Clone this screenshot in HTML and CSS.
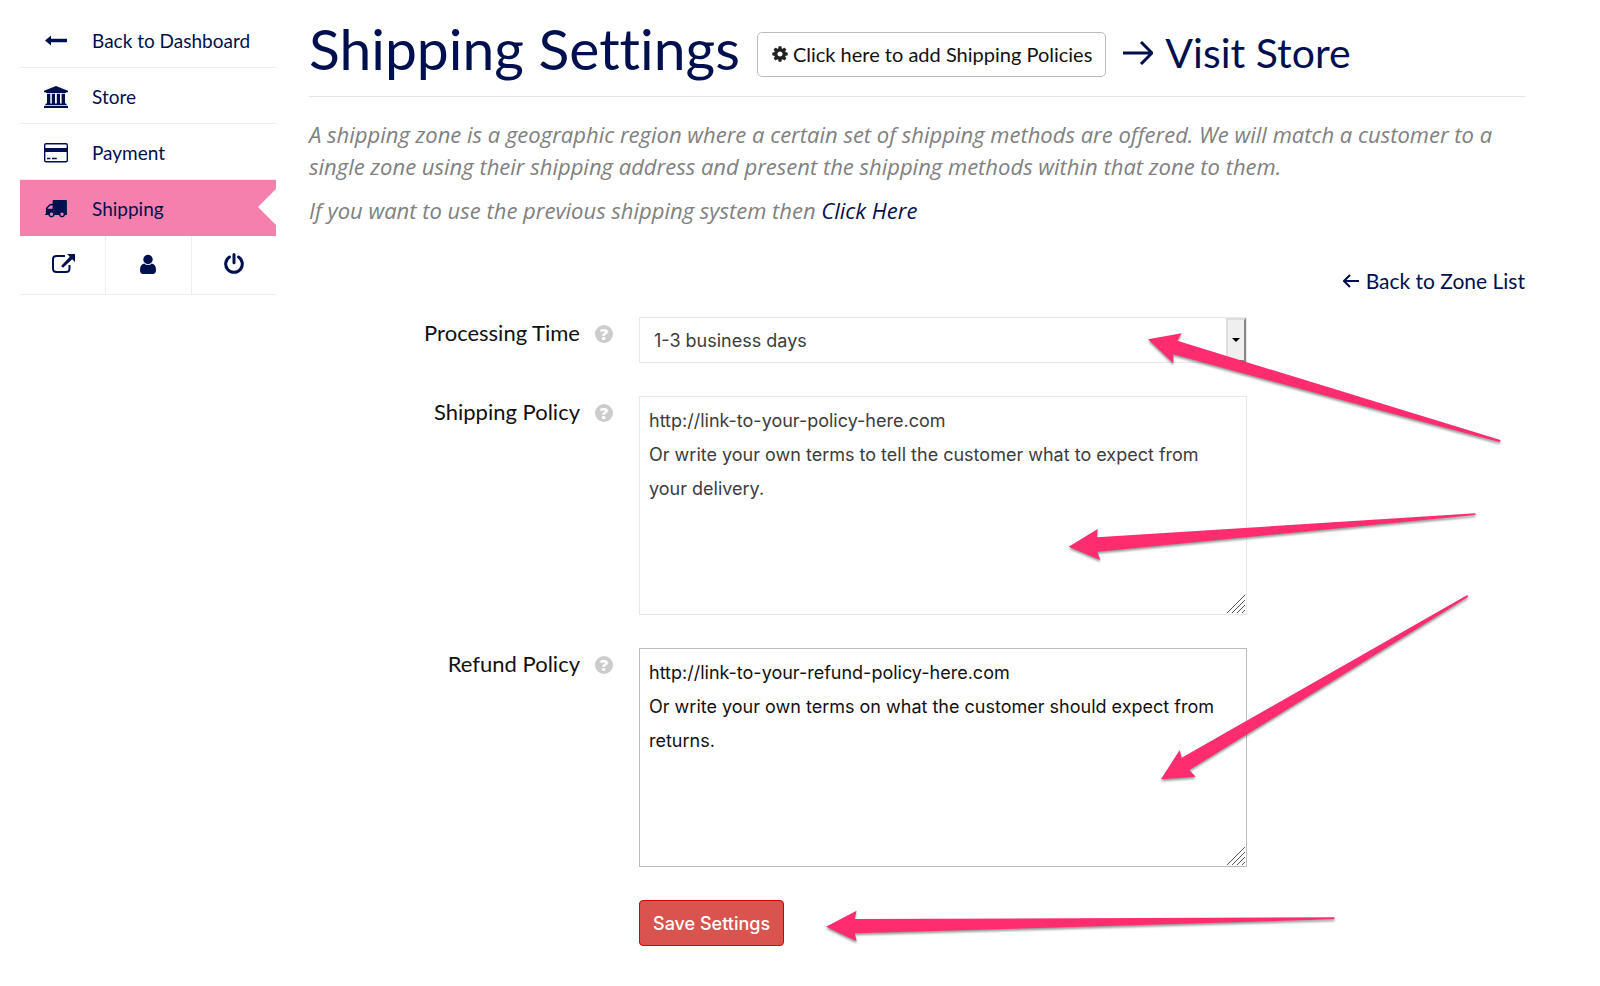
FILE: index.html
```html
<!DOCTYPE html>
<html lang="en">
<head>
<meta charset="utf-8">
<title>Shipping Settings</title>
<link rel="stylesheet" href="styles.css">
</head>
<body>
<div class="layout">
  <nav class="sidebar">
    <a class="nav-item" href="#"><svg class="nav-icon" viewBox="0 0 24 24"><path d="M1 11.500l6-5v3.300h16v3.400H7v3.300z"/></svg>Back to Dashboard</a>
    <a class="nav-item" href="#"><svg class="nav-icon" viewBox="0 0 24 24"><path d="M12 1l12 4.800v1.400h-1.600q0 .8-.8.8H2.400q-.8 0-.8-.8H0V5.800zM3 8.800h3.300v9.600h1.500V8.800H11v9.600h1.800V8.800h3.200v9.600h1.600V8.800H21v9.600h.8q.8 0 .8.800v.8H1.400v-.8q0-.8.800-.8H3zM.8 20.800h22.400q.8 0 .8.800V23H0v-1.400q0-.8.8-.8z"/></svg>Store</a>
    <a class="nav-item" href="#"><svg class="nav-icon" viewBox="0 0 24 24"><path fill-rule="evenodd" d="M2 2h20q2 0 2 2v15.500q0 2-2 2H2q-2 0-2-2V4q0-2 2-2zm0 1.500q-.6 0-.6.600V7h21.200V4.100q0-.6-.6-.6zM1.400 11v8.300q0 .7.6.7h20q.6 0 .6-.7V11zM3 16.800h3.400v1.500H3zM8 16.800h4.800v1.500H8z"/></svg>Payment</a>
    <a class="nav-item active" href="#"><svg class="nav-icon" viewBox="0 0 24 24"><path fill-rule="evenodd" d="M9.500 3H22q.9 0 .9.900v13.300q0 .9-.9.900h-.9a3.200 3.200 0 0 1-6.200 0h-4.300a3.200 3.200 0 0 1-6.200 0H1.600q-.6 0-.6-.8.900-.6.900-1.100v-4.300q0-1 .6-1.600l2.900-2.900q.6-.6 1.500-.6H8.600V3.900q0-.9.900-.9zM3.700 11.700h4.900V8.400H6.800q-.3 0-.5.200L3.900 11q-.2.200-.2.400zM7.500 15.600a1.700 1.700 0 1 0 0 3.400 1.700 1.700 0 0 0 0-3.400zM18 15.600a1.700 1.700 0 1 0 0 3.400 1.700 1.700 0 0 0 0-3.400z"/></svg>Shipping</a>
    <div class="quick-links">
      <a class="quick-link" href="#" aria-label="Open store"><svg class="nav-icon" viewBox="0 0 24 24"><path class="line" d="M14 4H5.500Q2 4 2 7v9.500Q2 20 5.500 20H15q3.500 0 3.500-3.500V13"/><path d="M16 2h8v8l-2.800-2.800-9.200 8.600-1.900-1.900 8.700-9.100z"/></svg></a>
      <a class="quick-link" href="#" aria-label="Profile"><svg class="nav-icon" viewBox="0 0 24 24"><circle cx="12" cy="7.500" r="4.700"/><path d="M8.200 11.500a5.500 5.500 0 0 0 7.600 0q4.200.8 4.200 6.500 0 4-3.200 4H7.200Q4 22 4 18q0-5.700 4.200-6.500z"/></svg></a>
      <a class="quick-link" href="#" aria-label="Log out"><svg class="nav-icon" viewBox="0 0 24 24"><path class="thick" d="M7.500 5a8.300 8.300 0 1 0 9 0M12 2.400v8.400"/></svg></a>
    </div>
  </nav>
  <main class="content">
    <header class="page-header">
      <h1 class="page-title">Shipping Settings</h1>
      <a class="policy-button" href="#"><svg class="cog" viewBox="0 0 1792 1792"><path d="M1152 896q0-106-75-181t-181-75-181 75-75 181 75 181 181 75 181-75 75-181zm512-109v222q0 12-8 23t-20 13l-185 28q-19 54-39 91 35 50 107 138 10 12 10 25t-9 23q-27 37-99 108t-94 71q-12 0-26-9l-138-108q-44 23-91 38-16 136-29 186-7 28-36 28h-222q-14 0-24.500-8.500t-11.500-21.500l-28-184q-49-16-90-37l-141 107q-10 9-25 9-14 0-25-11-126-114-165-168-7-10-7-23 0-12 8-23 15-21 51-66.500t54-70.500q-27-50-41-99l-183-27q-13-2-21-12.500t-8-23.500v-222q0-12 8-23t19-13l186-28q14-46 39-92-40-57-107-138-10-12-10-24 0-10 9-23 26-36 98.500-107.500t94.500-71.500q13 0 26 10l138 107q44-23 91-38 16-136 29-186 7-28 36-28h222q14 0 24.500 8.500t11.500 21.500l28 184q49 16 90 37l142-107q9-9 24-9 13 0 25 10 129 119 165 170 7 8 7 22 0 12-8 23-15 21-51 66.500t-54 70.500q26 50 41 98l183 28q13 2 21 12.500t8 23.500z"/></svg>Click here to add Shipping Policies</a>
      <a class="visit-link" href="#"><svg class="arrow-right" viewBox="0 0 30 24"><path d="M0 12h28M18 1l11 11-11 11"/></svg>Visit Store</a>
    </header>
    <p class="intro">A shipping zone is a geographic region where a certain set of shipping methods are offered. We will match a customer to a single zone using their shipping address and present the shipping methods within that zone to them.</p>
    <p class="intro">If you want to use the previous shipping system then <a class="link" href="#">Click Here</a></p>
    <div class="back-row"><a class="back-link" href="#"><svg class="arrow-left" viewBox="0 0 16 14"><path d="M16 7H1M7 1L1 7l6 6"/></svg>Back to Zone List</a></div>
    <form class="settings">
      <div class="field">
        <div class="field-label"><label for="time">Processing Time</label><button class="help" type="button">?</button></div>
        <div class="control">
          <select class="select" id="time"><option>1-3 business days</option></select>
          <span class="select-arrow"></span>
        </div>
      </div>
      <div class="field">
        <div class="field-label"><label for="shipping">Shipping Policy</label><button class="help" type="button">?</button></div>
        <div class="control">
          <textarea class="textarea" id="shipping">http://link-to-your-policy-here.com
Or write your own terms to tell the customer what to expect from your delivery.</textarea>
          <svg class="grip" viewBox="0 0 18 18"><path d="M0 18L18 0M5 18L18 5M10 18l8-8M15 18l3-3"/></svg>
        </div>
      </div>
      <div class="field">
        <div class="field-label"><label for="refund">Refund Policy</label><button class="help" type="button">?</button></div>
        <div class="control">
          <textarea class="textarea focused" id="refund">http://link-to-your-refund-policy-here.com
Or write your own terms on what the customer should expect from returns.</textarea>
          <svg class="grip" viewBox="0 0 18 18"><path d="M0 18L18 0M5 18L18 5M10 18l8-8M15 18l3-3"/></svg>
        </div>
      </div>
      <div class="field">
        <button class="save" type="submit">Save Settings</button>
      </div>
    </form>
  </main>
</div>
<svg class="annotations" viewBox="0 0 1600 986">
  <path d="M1148 339.300L1181.700 333.300 1177.300 340.700Q1340 391 1500.500 440L1500 442.300Q1340 400 1173.300 354.300V363.300z"/>
  <path d="M1068.700 546.700L1097.700 529 1097 537.300 1475.500 513.300V515L1097.300 551.700 1100.300 560z"/>
  <path d="M1161 779.300L1179.700 750 1181.700 757.700 1467.300 595 1468 597 1189.300 770 1195.700 776.700z"/>
  <path d="M826 926.700L856.600 910.700 854.700 919 1334.500 917.300V919.300L854.700 933.300 856.600 941.300z"/>
</svg>
</body>
</html>
```
FILE: styles.css
```css
* { box-sizing: border-box; }
body {
  margin: 0;
  position: relative;
  background: #fff;
  color: #111;
  font-family: Lato, "Open Sans", sans-serif;
  font-size: 20px;
  font-variant-ligatures: none;
}
a { color: #00104f; text-decoration: none; }
.layout {
  display: grid;
  grid-template-columns: 256px minmax(0, 1fr);
  gap: 33px;
  padding: 12px 75px 40px 20px;
}
.nav-item {
  display: flex;
  align-items: center;
  gap: 24px;
  height: 56px;
  padding: 2px 0 0 24px;
  border-bottom: 1px solid #eee;
  font-size: 19px;
}
.nav-icon { width: 24px; height: 24px; flex: none; fill: #00104f; }
.nav-icon .line { fill: none; stroke: #00104f; stroke-width: 2; }
.nav-icon .thick { fill: none; stroke: #00104f; stroke-width: 3; stroke-linecap: round; }
.nav-item.active {
  border-bottom-color: #f57fab;
  background: #f680ad;
  clip-path: polygon(0 0, 100% 0, 100% 9px, 238px 27px, 100% 45px, 100% 100%, 0 100%);
}
.quick-links { display: grid; grid-template-columns: repeat(3, 1fr); border-bottom: 1px solid #eee; }
.quick-link {
  display: flex;
  align-items: center;
  justify-content: center;
  height: 58px;
  padding-bottom: 2px;
}
.quick-link + .quick-link { border-left: 1px solid #eee; }
.page-header {
  display: flex;
  align-items: center;
  gap: 17px;
  height: 85px;
  border-bottom: 1px solid #e5e5e5;
}
.page-title { margin: 0; padding-bottom: 12px; color: #00104f; font-size: 57px; font-weight: 400; line-height: 70px; }
.policy-button {
  display: flex;
  align-items: center;
  gap: 4px;
  height: 45px;
  padding: 0 13px;
  border: 1px solid #bbb;
  border-radius: 5px;
  color: #111;
  font-size: 20px;
}
.cog { width: 18px; height: 18px; fill: #222; }
.visit-link { display: flex; align-items: center; gap: 12px; padding-bottom: 3px; font-size: 41px; }
.arrow-right { width: 30px; height: 24px; fill: none; stroke: #00104f; stroke-width: 3; }
.intro {
  margin: 0 0 12px;
  color: #808080;
  font-family: "Open Sans", sans-serif;
  font-size: 22px;
  font-style: italic;
  line-height: 32px;
}
.page-header + .intro { margin-top: 21px; }
.back-row { display: flex; justify-content: flex-end; margin: 39px 0 20px; }
.back-link { display: flex; align-items: center; gap: 7px; font-size: 21px; line-height: 32px; }
.arrow-left { width: 16px; height: 14px; fill: none; stroke: #00104f; stroke-width: 2; }
.settings { display: grid; gap: 33px; }
.field { display: grid; grid-template-columns: 25% 50%; column-gap: 26px; }
.field-label {
  display: flex;
  align-items: center;
  justify-content: flex-end;
  gap: 15px;
  height: 34px;
  font-size: 22px;
  line-height: 34px;
}
.field-label label { padding-bottom: 2px; }
.help {
  width: 18px;
  height: 18px;
  padding: 0;
  border: 0;
  border-radius: 50%;
  background: #ccc;
  color: #fff;
  font: 900 16px/18px "Open Sans", sans-serif;
  text-align: center;
}
.control { position: relative; display: flex; }
.select, .textarea {
  width: 100%;
  margin: 0;
  border: 1px solid #e8e8e8;
  border-radius: 0;
  background: #fff;
  color: #3c3c3c;
  font-family: Inter, "Liberation Sans", sans-serif;
  font-size: 18px;
}
.select { height: 46px; padding: 0 14px; appearance: none; }
.select-arrow {
  position: absolute;
  top: 1px;
  right: 1px;
  bottom: 1px;
  display: flex;
  align-items: center;
  justify-content: center;
  width: 20px;
  border: 2px solid;
  border-color: #ddd #888 #888 #ddd;
  background: #efefef;
  pointer-events: none;
}
.select-arrow::after { content: ""; border: 4px solid transparent; border-top-color: #000; border-bottom: 0; }
.textarea { height: 219px; padding: 7px 9px; line-height: 34px; resize: none; overflow: hidden; }
.textarea.focused { border-color: #bbb; color: #111; }
.grip { position: absolute; right: 2px; bottom: 2px; width: 18px; height: 18px; fill: none; stroke: #555; stroke-width: 1; }
.save {
  grid-column: 2;
  justify-self: start;
  height: 46px;
  padding: 0 13px;
  border: 1px solid #d40000;
  border-radius: 4px;
  background: #d9534f;
  color: #fff;
  font: 500 18px Inter, sans-serif;
}
.annotations {
  position: absolute;
  top: 0;
  left: 0;
  width: 100%;
  fill: #ff2d6f;
  filter: drop-shadow(0 2px 1px rgba(0, 0, 0, .4));
  pointer-events: none;
}
```
